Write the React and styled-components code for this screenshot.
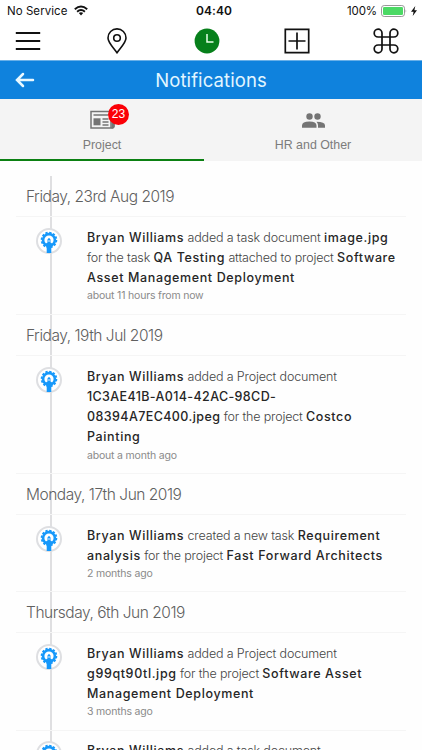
import React from "react";
import styled, { createGlobalStyle } from "styled-components";

const Global = createGlobalStyle`
  * { box-sizing: border-box; }
  html, body { margin: 0; padding: 0; background: #fff; }
  body { height: 750px; overflow: hidden; font-family: Inter, "Liberation Sans", sans-serif; }
  svg { display: block; }
`;
const Screen = styled.div`
  width: 422px; height: 750px; overflow: hidden; background: #fefefe;
  display: flex; flex-direction: column;
`;
const StatusBar = styled.div`
  height: 21px; flex: none; display: grid; grid-template-columns: 1fr auto 1fr;
  align-items: center; padding: 0 5px 0 7px; color: #111; font-size: 11.5px; background: #fff;
`;
const Carrier = styled.div`display: flex; align-items: center; gap: 7px; letter-spacing: 0.05px;`;
const Clock = styled.div`font-weight: 600; font-size: 12px; letter-spacing: 0.1px; position: relative; left: 2px;`;
const Power = styled.div`
  display: flex; align-items: center; justify-content: flex-end; gap: 4px; letter-spacing: -0.1px;
`;
const NavBar = styled.nav`
  height: 39px; flex: none; display: grid; grid-template-columns: 56px 122px 58px 121px 58px;
  align-items: center; background: #fff; color: #111;
  & > svg { justify-self: center; }
`;
const TitleBar = styled.header`
  height: 39px; flex: none; border-top: 1px solid #69b0e8; background: #0f82dd; color: #e2f6ff;
  display: grid; grid-template-columns: 50px 1fr 50px; align-items: center;
  & > svg { margin-left: 15px; }
`;
const Title = styled.h1`
  margin: 0; text-align: center; font-size: 18.5px; font-weight: 400; letter-spacing: 0.1px; line-height: 38px;
`;
const Tabs = styled.div`
  height: 62px; flex: none; display: grid; grid-template-columns: 204px 218px; background: #f4f4f4;
`;
const Tab = styled.div`
  display: flex; flex-direction: column; align-items: center; padding-top: 9px;
  border-bottom: 2px solid ${(p) => (p.$active ? "#0b8012" : "transparent")};
  color: #7c7c7c; font: 12.4px/16px "Liberation Sans", Arial, sans-serif;
`;
const TabIcon = styled.div`position: relative; height: 29px; padding-top: 1.5px;`;
const Badge = styled.span`
  position: absolute; left: 18.5px; top: -4px; width: 21px; height: 21px; border-radius: 50%;
  background: #fb0007; color: #fff; text-align: center; font-size: 12px; line-height: 21px;
`;
const Timeline = styled.main`
  position: relative; margin: 15px 16px 0; flex: 1; overflow: hidden;
`;
const Rail = styled.div`
  position: absolute; left: 34px; top: 0; bottom: 0; width: 2px; background: #dfdfe1;
`;
const DateHeading = styled.h2`
  position: relative; margin: 0; height: 41px; padding: 0 10px; border-bottom: 1px solid #f5f5f5;
  font-size: 15.5px; font-weight: 300; line-height: 41px; color: #606060; white-space: nowrap;
  letter-spacing: -0.47px;
`;
const Entry = styled.article`
  position: relative; display: grid; grid-template-columns: 71px 1fr; height: ${(p) => p.$height}px;
  border-bottom: 1px solid #f5f5f5; padding-top: 10.5px;
`;
const Avatar = styled.div`
  width: 26px; height: 26px; margin-left: 20px; border: 2px solid #dedfe2; border-radius: 50%;
  background: #fff;
`;
const Line = styled.div`
  height: 20.3px; line-height: 20.3px; font-size: 12.5px; white-space: nowrap; display: flex;
`;
const Run = styled.span`
  white-space: pre; font-weight: ${(p) => (p.$strong ? 500 : 300)};
  color: ${(p) => (p.$strong ? "#262626" : "#444")};
  letter-spacing: ${(p) => p.$track}px;
`;
const Time = styled.div`font-size: 10.5px; line-height: 15px; color: #8a8a8a; letter-spacing: -0.19px;`;

const Wifi = () => (
  <svg width="14" height="11" viewBox="0 0 14 11" fill="none" stroke="#111" strokeWidth="1.9">
    <path d="M.8 4.2Q7-1.2 13.2 4.2M3.1 6.7Q7 3.3 10.9 6.7" />
    <path d="M4.8 8.1Q7 6.2 9.2 8.1L7 10.4Z" fill="#111" stroke="none" />
  </svg>
);
const Battery = () => (
  <svg width="26" height="12" viewBox="0 0 26 12">
    <rect x=".5" y=".5" width="23" height="11" rx="2.7" fill="none" stroke="#999" />
    <rect x="2" y="2" width="20" height="8" rx="1.3" fill="#4bd964" />
    <path d="M24.6 4.2Q26 6 24.6 7.8Z" fill="#999" />
  </svg>
);
const Bolt = () => (
  <svg width="6" height="10" viewBox="0 0 6 10"><path d="M4.3 0 0 5.7h2.6L1.7 10 6 4.2H3.4Z" fill="#111" /></svg>
);
const Menu = () => (
  <svg width="26" height="20" viewBox="0 0 26 20" stroke="#111" strokeWidth="2"><path d="M.8 2h24.4M.8 10h24.4M.8 18h24.4" /></svg>
);
const Pin = () => (
  <svg width="20" height="26" viewBox="0 0 20 26" fill="none" stroke="#111" strokeWidth="1.6">
    <path d="M10 24.7C6.5 19.6 1 14.5 1 9.9a9 9 0 0 1 18 0c0 4.6-5.5 9.7-9 14.8Z" /><circle cx="10" cy="10" r="3.3" />
  </svg>
);
const ClockIcon = () => (
  <svg width="26" height="26" viewBox="0 0 26 26"><circle cx="13" cy="13" r="12.4" fill="#07801b" /><path d="M13 6v8h6.5" fill="none" stroke="#e8ffe8" strokeWidth="1.5" /></svg>
);
const Plus = () => (
  <svg width="26" height="26" viewBox="0 0 26 26" fill="none" stroke="#111" strokeWidth="1.7"><path d="M1.3 1.3h23.4v23.4H1.3ZM13 4.5v17M4.5 13h17" /></svg>
);
const Command = () => (
  <svg width="26" height="26" viewBox="0 0 26 26" fill="none" stroke="#111" strokeWidth="1.7">
    <path d="M9 9V5a3.9 3.9 0 1 0-3.9 4H20.9A3.9 3.9 0 1 0 17 5v16a3.9 3.9 0 1 0 3.9-4H5.1A3.9 3.9 0 1 0 9 21Z" />
  </svg>
);
const Back = () => (
  <svg width="20" height="16" viewBox="0 0 20 16" fill="none" stroke="#e9f8ff" strokeWidth="2.5" strokeLinecap="round"><path d="M18 8H2.5M8 2 2 8l6 6" /></svg>
);
const News = () => (
  <svg width="25" height="20" viewBox="0 0 25 20" fill="none" stroke="#747474">
    <path d="M1 1.5h20V18H1ZM21 5h3v11q0 2-2 2H19" strokeWidth="1.5" />
    <path d="M3.5 5h15M12.5 9h6M12.5 12h6M12.5 15h6" strokeWidth="1.4" />
    <path d="M3.500 8.300h7v7h-7Z" fill="#747474" stroke="none" />
    <path d="M21.5 10h3v6.500l-1.500 2h-1.500Z" fill="#747474" stroke="none" />
  </svg>
);
const People = () => (
  <svg width="23" height="20" viewBox="0 0 23 20" fill="#747474">
    <circle cx="7.5" cy="6.500" r="3.200" /><circle cx="15.500" cy="6.500" r="3.200" />
    <path d="M0 17.700v-2.300Q0 11.700 7.500 11.500q7 .2 7 3.900v2.300ZM16 17.700v-2.500q0-2-1.500-3.500 8.500 0 8.500 3.700v2.300Z" />
  </svg>
);
const Gear = () => (
  <svg width="22" height="24" viewBox="0 0 22 24">
    <circle cx="11" cy="10" r="7.400" fill="none" stroke="#1698fa" strokeWidth="1.800" strokeDasharray="2.300 1.570" />
    <circle cx="11" cy="10" r="5.900" fill="none" stroke="#1698fa" strokeWidth="2.600" />
    <path d="M8.700 23v-6l-2.200-2.600 3-1.900V9.500Q11 6.400 12.500 9.500v3l3 1.900-2.200 2.600v6Z" fill="#1698fa" />
    <circle cx="11" cy="11" r=".8" fill="#fff" />
  </svg>
);

const b = (text, track = 0.63) => ({ text, strong: true, track });
const t = (text, track = -0.16) => ({ text, track });
const days = [
  { date: "Friday, 23rd Aug 2019", height: 98, time: "about 11 hours from now", lines: [
    [b("Bryan Williams"), t(" added a task document "), b("image.jpg")],
    [t("for the task "), b("QA Testing"), t(" attached to project "), b("Software")],
    [b("Asset Management Deployment")],
  ] },
  { date: "Friday, 19th Jul 2019", height: 118, time: "about a month ago", lines: [
    [b("Bryan Williams"), t(" added a Project document")],
    [b("1C3AE41B-A014-42AC-98CD-", 0.37)],
    [b("08394A7EC400.jpeg", 0.41), t(" for the project "), b("Costco")],
    [b("Painting")],
  ] },
  { date: "Monday, 17th Jun 2019", height: 77, time: "2 months ago", lines: [
    [b("Bryan Williams"), t(" created a new task "), b("Requirement")],
    [b("analysis"), t(" for the project "), b("Fast Forward Architects")],
  ] },
  { date: "Thursday, 6th Jun 2019", height: 97.5, time: "3 months ago", lines: [
    [b("Bryan Williams"), t(" added a Project document")],
    [b("g99qt90tl.jpg"), t(" for the project "), b("Software Asset")],
    [b("Management Deployment")],
  ] },
  { height: 98, time: "3 months ago", lines: [[b("Bryan Williams"), t(" added a task document")]] },
];

export default function App() {
  return (
    <>
      <Global />
      <Screen>
        <StatusBar>
          <Carrier>No Service <Wifi /></Carrier>
          <Clock>04:40</Clock>
          <Power>100% <Battery /><Bolt /></Power>
        </StatusBar>
        <NavBar><Menu /><Pin /><ClockIcon /><Plus /><Command /></NavBar>
        <TitleBar><Back /><Title>Notifications</Title></TitleBar>
        <Tabs>
          <Tab $active><TabIcon><News /><Badge>23</Badge></TabIcon>Project</Tab>
          <Tab><TabIcon><People /></TabIcon>HR and Other</Tab>
        </Tabs>
        <Timeline>
          <Rail />
          {days.map((day, i) => (
            <React.Fragment key={i}>
              {day.date && <DateHeading>{day.date}</DateHeading>}
              <Entry $height={day.height}>
                <Avatar><Gear /></Avatar>
                <div>
                  {day.lines.map((line, j) => (
                    <Line key={j}>
                      {line.map((run, k) => (
                        <Run key={k} $strong={run.strong} $track={run.track}>{run.text}</Run>
                      ))}
                    </Line>
                  ))}
                  <Time>{day.time}</Time>
                </div>
              </Entry>
            </React.Fragment>
          ))}
        </Timeline>
      </Screen>
    </>
  );
}
